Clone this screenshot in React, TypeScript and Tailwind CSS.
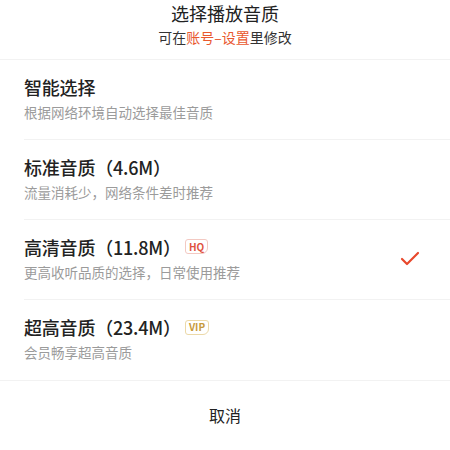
import { Check } from "lucide-react";

type Option = {
  title: string;
  desc: string;
  badge?: "HQ" | "VIP";
  selected?: boolean;
};

const options: Option[] = [
  { title: "智能选择", desc: "根据网络环境自动选择最佳音质" },
  { title: "标准音质（4.6M）", desc: "流量消耗少，网络条件差时推荐" },
  { title: "高清音质（11.8M）", desc: "更高收听品质的选择，日常使用推荐", badge: "HQ", selected: true },
  { title: "超高音质（23.4M）", desc: "会员畅享超高音质", badge: "VIP" },
];

function Badge({ kind }: { kind: "HQ" | "VIP" }) {
  const hq = kind === "HQ";
  return (
    <span
      className={
        hq
          ? "ml-[4px] flex h-[15px] items-center rounded-[3px] rounded-br-[6px] border border-[#f3c9c2] px-[3px] text-[10px] font-semibold leading-none text-[#e0533f]"
          : "ml-[4px] flex h-[15px] items-center rounded-[3px] rounded-br-[6px] border border-[#ecd9a8] px-[3px] text-[10px] font-semibold leading-none text-[#c89a3c]"
      }
    >
      {kind}
    </span>
  );
}

export default function App() {
  return (
    <div
      className="flex h-[450px] w-[450px] flex-col bg-white text-[#222]"
      style={{ fontFamily: '"Noto Sans CJK SC", "Noto Sans", sans-serif' }}
    >
      <div className="flex h-[60px] flex-col items-center border-b border-[#f2f2f2] pt-[1px]">
        <h1 className="text-[18px] leading-[24px]">选择播放音质</h1>
        <p className="mt-[2px] text-[14px] leading-[20px] text-[#333]">
          可在<span className="text-[#e9582e]">账号–设置</span>里修改
        </p>
      </div>

      <ul className="border-b border-[#f2f2f2]">
        {options.map((o, i) => (
          <li key={o.title} className="pl-[24px]">
            <div
              className={
                "flex h-[80px] items-center pr-[30px] " +
                (i < options.length - 1 ? "border-b border-[#f2f2f2]" : "")
              }
            >
              <div className="flex flex-1 flex-col pb-[2px]">
                <div className="flex items-center">
                  <span className="text-[18px] font-medium leading-[24px] tracking-[-0.2px] proportional-nums">
                    {o.title}
                  </span>
                  {o.badge ? <Badge kind={o.badge} /> : null}
                </div>
                <span className="mt-[3px] text-[13.5px] leading-[20px] text-[#9b9b9b]">{o.desc}</span>
              </div>
              {o.selected ? (
                <Check className="mr-[-2px] h-[24px] w-[24px] text-[#e8482c]" strokeWidth={2.2} />
              ) : null}
            </div>
          </li>
        ))}
      </ul>

      <button type="button" className="flex h-[70px] items-center justify-center text-[16px] text-[#222]">
        取消
      </button>
    </div>
  );
}
